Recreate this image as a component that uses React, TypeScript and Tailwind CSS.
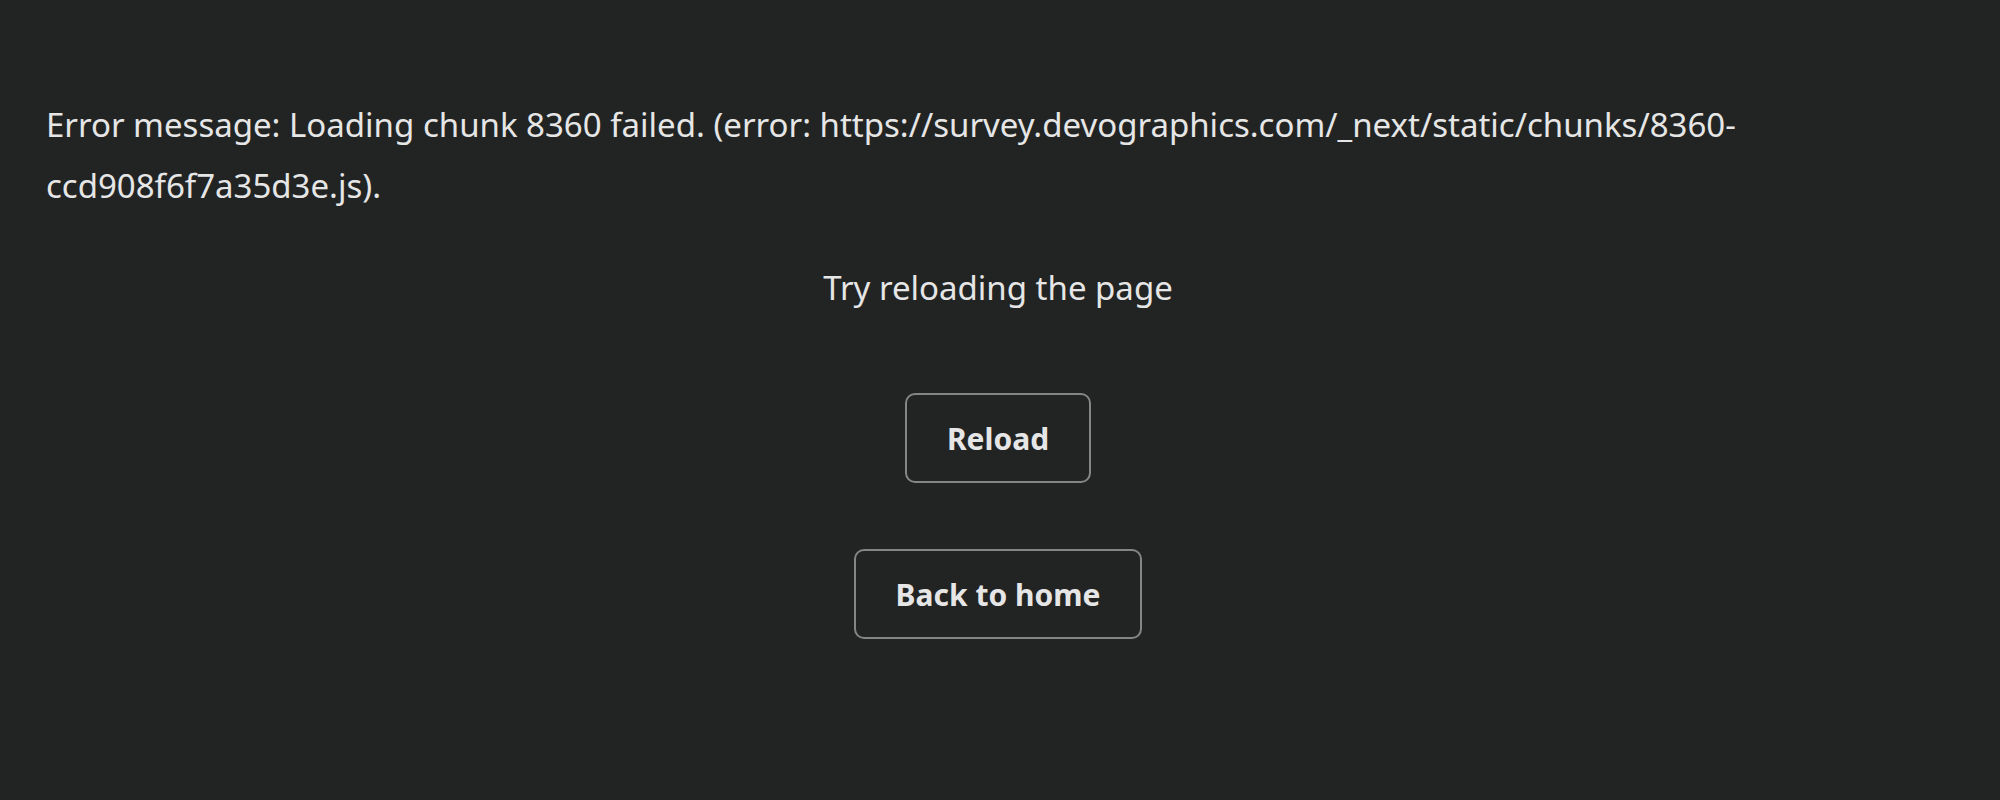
export default function App() {
	return (
		<div
			className="min-h-screen bg-[#222424] text-[#e6e6e6]"
			style={{ fontFamily: "'Noto Sans', Lato, sans-serif" }}
		>
			<main className="pt-[94px] pl-[46px] pr-[50px]">
				<p className="text-[33px] leading-[61px]">
					Error message: Loading chunk 8360 failed. (error:
					https://survey.devographics.com/_next/static/chunks/8360-ccd908f6f7a35d3e.js).
				</p>

				<p className="mt-[41px] text-center text-[33px] leading-[61px]">Try reloading the page</p>

				<div className="mt-[75px] flex flex-col items-center gap-[66px]">
					<button className="flex h-[90px] items-center rounded-[10px] border-2 border-[#858585] px-[40px] text-[30px] font-bold">
						Reload
					</button>
					<button className="flex h-[90px] items-center rounded-[10px] border-2 border-[#858585] px-[40px] text-[30px] font-bold">
						Back to home
					</button>
				</div>
			</main>
		</div>
	);
}
